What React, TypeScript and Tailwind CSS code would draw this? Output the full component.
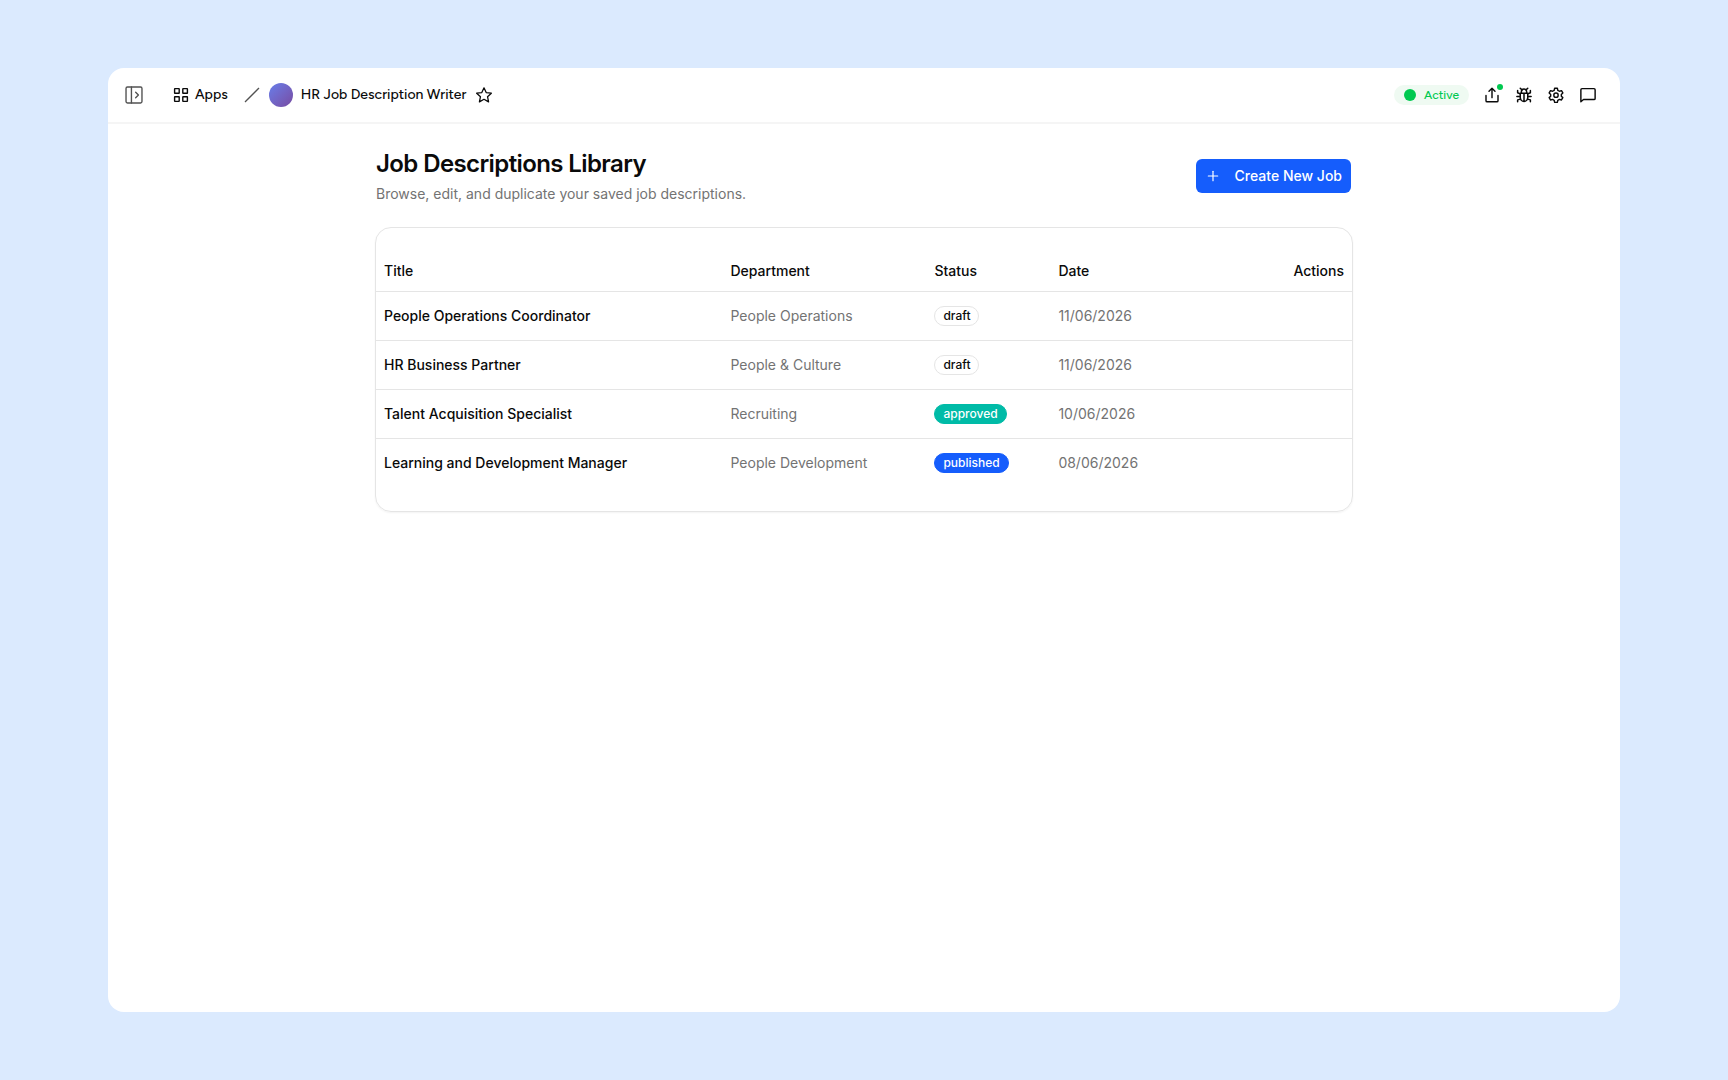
import { Plus } from "lucide-react";

type Job = {
  title: string;
  department: string;
  status: "draft" | "approved" | "published";
  date: string;
};

const jobs: Job[] = [
  { title: "People Operations Coordinator", department: "People Operations", status: "draft", date: "11/06/2026" },
  { title: "HR Business Partner", department: "People & Culture", status: "draft", date: "11/06/2026" },
  { title: "Talent Acquisition Specialist", department: "Recruiting", status: "approved", date: "10/06/2026" },
  { title: "Learning and Development Manager", department: "People Development", status: "published", date: "08/06/2026" },
];

const badgeStyles = {
  draft: "border-neutral-200 text-neutral-950",
  approved: "border-[#00bba7] bg-[#00bba7] text-white",
  published: "border-[#155dfc] bg-[#155dfc] text-white",
};

const stroke = {
  viewBox: "0 0 24 24",
  fill: "none",
  stroke: "currentColor",
  strokeLinecap: "round",
  strokeLinejoin: "round",
} as const;

function PanelIcon() {
  return (
    <svg {...stroke} strokeWidth={1.5} className="size-[22px]">
      <rect x="3.3" y="3.3" width="17.4" height="17.4" rx="1.6" />
      <path d="M9.2 3.3v17.4M13.8 9l3 3-3 3" />
    </svg>
  );
}

function GridIcon() {
  return (
    <svg viewBox="0 0 16 16" fill="none" stroke="currentColor" strokeWidth={1.4} className="size-4">
      <rect x="1.6" y="1.6" width="4.6" height="4.6" rx="0.3" />
      <rect x="9.8" y="1.6" width="4.6" height="4.6" rx="0.3" />
      <rect x="1.6" y="9.8" width="4.6" height="4.6" rx="0.3" />
      <rect x="9.8" y="9.8" width="4.6" height="4.6" rx="0.3" />
    </svg>
  );
}

function StarIcon() {
  return (
    <svg {...stroke} strokeWidth={1.7} className="size-[18px]">
      <path d="M12 2.4l2.9 6.4 6.9.8-5.1 4.7 1.4 6.9-6.1-3.5-6.1 3.5 1.4-6.9-5.1-4.7 6.9-.8z" />
    </svg>
  );
}

function ShareIcon() {
  return (
    <svg {...stroke} strokeWidth={1.9} className="size-[18px]">
      <path d="M4 12.5v7A1.5 1.5 0 0 0 5.5 21h13a1.5 1.5 0 0 0 1.5-1.5v-7M12 15.5V3M8 7l4-4 4 4" />
    </svg>
  );
}

function BugIcon() {
  return (
    <svg {...stroke} strokeWidth={2} className="size-[18px]">
      <path d="M7 9.5h10v6a5 5 0 0 1-10 0zM12 10v10M8.5 9V7.5a3.5 3.5 0 0 1 7 0V9" />
      <path d="M9.3 5.2 7 3M14.7 5.2 17 3M7 14H2.5M17 14h4.5M7 10.5 3.5 9V6M17 10.5 20.500 9V6M7.5 17.5l-4 1V21M16.5 17.5l4 1V21" />
    </svg>
  );
}

function GearIcon() {
  return (
    <svg {...stroke} strokeWidth={1.9} className="size-[18px]">
      <path d="M9.6 5.7 10.2 3h3.6l.6 2.7L16.6 7l2.7-.8 1.8 3.1-2 1.9v2.4l2 1.9-1.8 3.1-2.7-.8-2.2 1.3-.6 2.7h-3.6l-.6-2.7-2.2-1.3-2.7.8-1.8-3.1 2-1.9v-2.4l-2-1.9 1.8-3.1 2.7.8z" />
      <circle cx="12" cy="12.3" r="2.9" />
    </svg>
  );
}

function ChatIcon() {
  return (
    <svg {...stroke} strokeWidth={1.9} className="size-[18px]">
      <path d="M2.5 21V5A1.5 1.5 0 0 1 4 3.5h16A1.5 1.5 0 0 1 21.5 5v11.5A1.5 1.5 0 0 1 20 18H6z" />
    </svg>
  );
}

function Header() {
  return (
    <header className="flex h-14 shrink-0 items-center justify-between border-b-2 border-neutral-100 pr-[23px] pl-[15px] font-[Figtree,Lato,sans-serif] font-medium">
      <nav className="flex items-center">
        <button type="button" aria-label="Open sidebar" className="text-neutral-600">
          <PanelIcon />
        </button>
        <a href="#apps" className="ml-7 flex items-center gap-1.5">
          <GridIcon />
          Apps
        </a>
        <svg viewBox="0 0 16 16" className="ml-4 size-4 stroke-neutral-600" strokeWidth={1.3}>
          <path d="M1 15 15 1" />
        </svg>
        <span className="ml-[9px] size-6 rounded-full bg-linear-to-br from-[#667eea] to-[#764ba2]" />
        <span className="ml-2">HR Job Description Writer</span>
        <button type="button" aria-label="Add to favourites" className="ml-[9px]">
          <StarIcon />
        </button>
      </nav>
      <div className="flex items-center gap-3.5">
        <span className="flex h-5 items-center gap-2 rounded-full bg-[#effaf2] px-2.5 text-xs text-[#00c950]">
          <span className="size-3 rounded-full bg-[#00c950]" />
          Active
        </span>
        <button type="button" aria-label="Share" className="relative">
          <ShareIcon />
          <span className="absolute -top-0.5 -right-0.5 size-1.5 rounded-full bg-[#00c950]" />
        </button>
        <button type="button" aria-label="Report a bug">
          <BugIcon />
        </button>
        <button type="button" aria-label="Settings">
          <GearIcon />
        </button>
        <button type="button" aria-label="Chat">
          <ChatIcon />
        </button>
      </div>
    </header>
  );
}

function JobsTable() {
  return (
    <div className="mt-[23px] rounded-2xl border border-neutral-200 py-6 shadow-xs">
      <table className="w-full table-fixed text-left">
        <thead>
          <tr className="h-[39px] border-b border-neutral-200">
            <th className="w-[35.5%] px-2 font-medium">Title</th>
            <th className="w-[20.9%] px-2 font-medium">Department</th>
            <th className="w-[12.7%] px-2 font-medium">Status</th>
            <th className="px-2 font-medium">Date</th>
            <th className="px-2 text-right font-medium">Actions</th>
          </tr>
        </thead>
        <tbody>
          {jobs.map((job) => (
            <tr key={job.title} className="h-[49px] border-b border-neutral-200 last:border-0">
              <td className="px-2 font-medium">{job.title}</td>
              <td className="px-2 text-neutral-500">{job.department}</td>
              <td className="px-2">
                <span className={`inline-flex h-5 items-center rounded-full border px-2 text-xs font-medium ${badgeStyles[job.status]}`}>
                  {job.status}
                </span>
              </td>
              <td className="px-2 text-neutral-500">{job.date}</td>
              <td />
            </tr>
          ))}
        </tbody>
      </table>
    </div>
  );
}

export default function App() {
  return (
    <div className="flex min-h-screen bg-blue-100 px-[108px] py-[68px] font-[Inter,sans-serif] text-sm text-neutral-950">
      <div className="flex grow flex-col rounded-2xl bg-white">
        <Header />
        <main className="mx-auto w-full max-w-[978px] pt-6">
          <div className="flex items-center justify-between pr-0.5 pl-px">
            <div>
              <h1 className="text-2xl font-semibold tracking-tight">Job Descriptions Library</h1>
              <p className="mt-1 text-neutral-500">Browse, edit, and duplicate your saved job descriptions.</p>
            </div>
            <button type="button" className="flex h-[34px] items-center gap-3.5 rounded-md bg-[#155dfc] px-[9px] font-medium text-white">
              <Plus className="size-4" strokeWidth={1.8} />
              Create New Job
            </button>
          </div>
          <JobsTable />
        </main>
      </div>
    </div>
  );
}
